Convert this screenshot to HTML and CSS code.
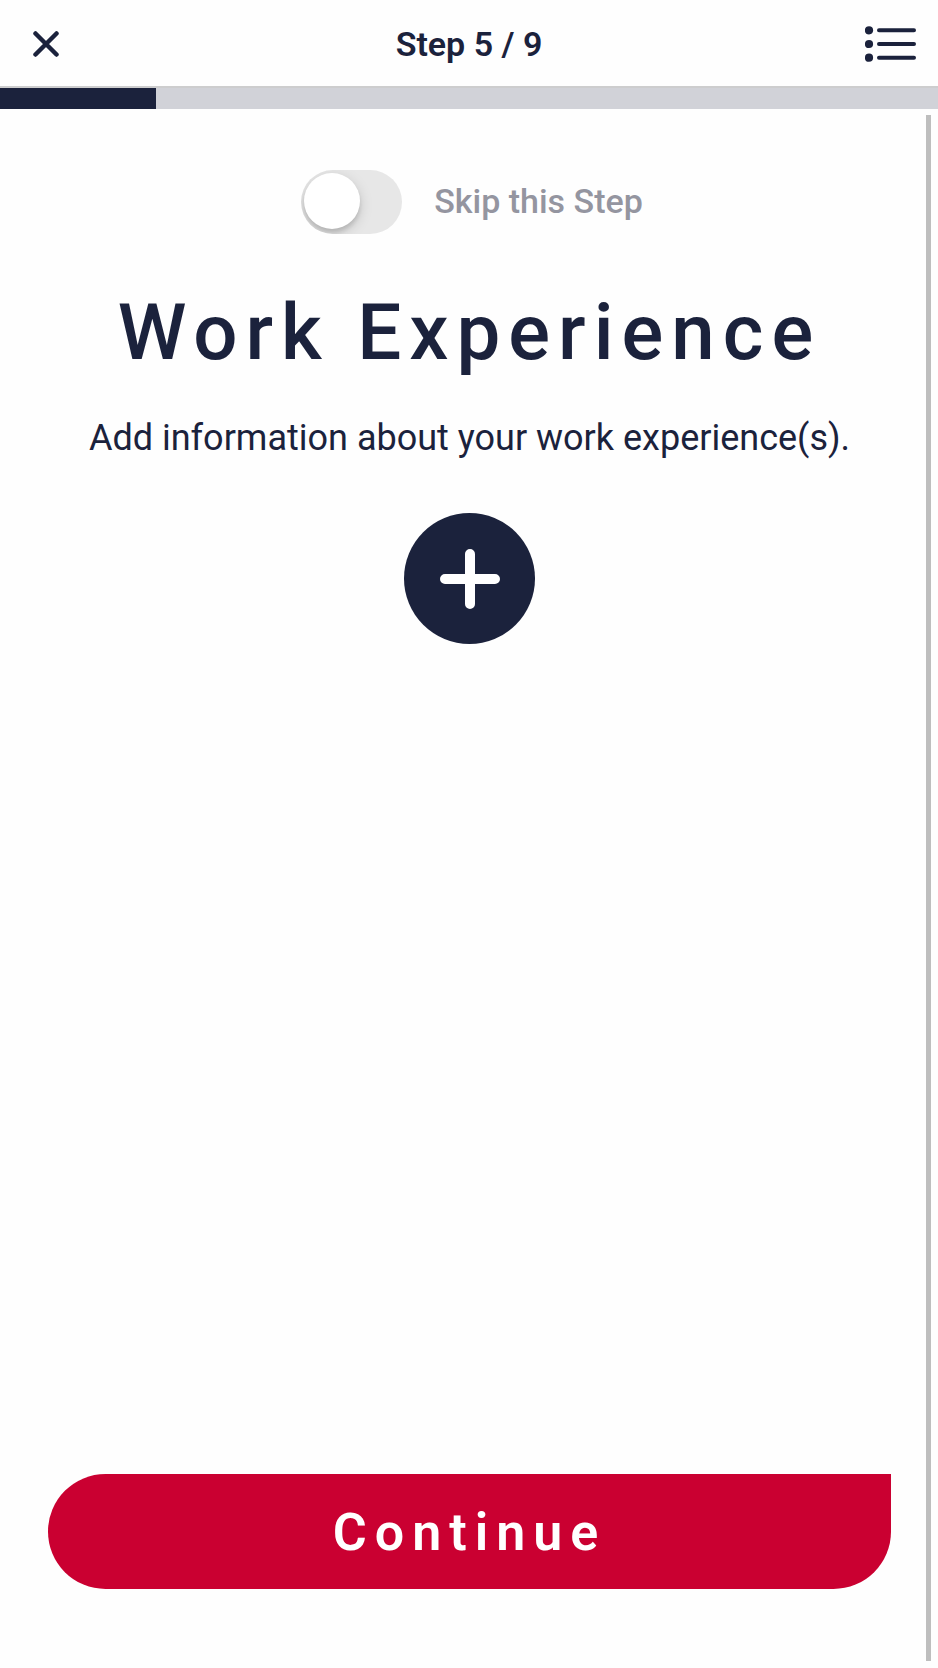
FILE: index.html
```html
<!DOCTYPE html>
<html lang="en">
<head>
<meta charset="utf-8">
<meta name="viewport" content="width=device-width, initial-scale=1">
<title>Work Experience</title>
<link rel="stylesheet" href="styles.css">
</head>
<body class="page">
  <header class="topbar">
    <button class="icon-button" type="button" aria-label="Close">
      <svg class="icon-close" viewBox="0 0 26 26" aria-hidden="true"><path d="M2.500 2.500 23.500 23.500M23.500 2.500 2.500 23.500"/></svg>
    </button>
    <p class="step">Step 5 / 9</p>
    <button class="icon-button icon-button-end" type="button" aria-label="All steps">
      <svg class="icon-list" viewBox="0 0 52 36" aria-hidden="true">
        <circle cx="4" cy="4.300" r="4.100"/><circle cx="4" cy="18" r="4.100"/><circle cx="4" cy="31.700" r="4.100"/>
        <path d="M14 4.300H49M14 18H49M14 31.700H49"/>
      </svg>
    </button>
  </header>
  <div class="progress" role="progressbar" aria-label="Progress" aria-valuemin="0" aria-valuemax="100" aria-valuenow="17">
    <div class="progress-fill"></div>
  </div>
  <main class="content">
    <label class="skip">
      <input class="switch" type="checkbox" role="switch">
      <span class="skip-text">Skip this Step</span>
    </label>
    <h1 class="title">Work Experience</h1>
    <p class="intro">Add information about your work experience(s).</p>
    <button class="add" type="button" aria-label="Add work experience">
      <svg class="icon-plus" viewBox="0 0 60 60" aria-hidden="true"><path d="M30 5V55M5 30H55"/></svg>
    </button>
    <button class="continue" type="button">Continue</button>
    <div class="scroll-thumb"></div>
  </main>
</body>
</html>
```
FILE: styles.css
```css
* {
  box-sizing: border-box;
}

.page {
  margin: 0;
  min-height: 100vh;
  display: flex;
  flex-direction: column;
  background: #fefefe;
  color: #1b223c;
  font-family: Roboto, "Liberation Sans", sans-serif;
}

button {
  border: 0;
  padding: 0;
  font-family: inherit;
  cursor: pointer;
}

.topbar {
  display: grid;
  grid-template-columns: 1fr auto 1fr;
  align-items: center;
  height: 88px;
  padding: 2px 21px 0 33px;
  border-bottom: 2px solid #cdcdce;
}

.icon-button {
  display: flex;
  justify-self: start;
  background: none;
  color: #1b223c;
}

.icon-button-end {
  justify-self: end;
}

.icon-close,
.icon-list,
.icon-plus {
  display: block;
  fill: none;
  stroke: currentColor;
  stroke-linecap: round;
}

.icon-close {
  width: 26px;
  height: 26px;
  stroke-width: 4.5;
}

.icon-list {
  width: 52px;
  height: 36px;
  stroke-width: 4;
}

.icon-list circle {
  fill: currentColor;
  stroke: none;
}

.step {
  margin: 0;
  padding-right: 12px;
  font-size: 34px;
  font-weight: 600;
  line-height: 40px;
}

.progress {
  height: 21px;
  background: #d1d2d8;
}

.progress-fill {
  width: 16.67%;
  height: 21px;
  background: #1b223c;
}

.content {
  position: relative;
  flex: 1;
  display: flex;
  flex-direction: column;
  align-items: center;
  padding: 61px 47px 79px 48px;
}

.skip {
  display: flex;
  align-items: center;
  gap: 32px;
  padding-left: 5px;
  color: #9495a0;
  font-size: 34px;
  font-weight: 500;
  line-height: 40px;
}

.skip-text {
  padding-bottom: 2px;
}

.switch {
  appearance: none;
  width: 101px;
  height: 64px;
  margin: 0;
  padding: 3px;
  border-radius: 32px;
  background: #e7e7e7;
  overflow: hidden;
}

.switch::before {
  content: "";
  display: block;
  width: 56px;
  height: 56px;
  border-radius: 50%;
  background: #fff;
  box-shadow: 0 4px 14px rgba(0, 0, 0, 0.15), 0 4px 4px rgba(0, 0, 0, 0.12);
}

.switch:checked::before {
  margin-left: auto;
}

.title {
  margin: 54px 0 0;
  font-size: 78px;
  font-weight: 500;
  line-height: 90px;
  letter-spacing: 8px;
  text-align: center;
}

.intro {
  margin: 39px 0 0;
  font-size: 36px;
  line-height: 42px;
  text-align: center;
}

.add {
  display: grid;
  place-items: center;
  width: 131px;
  height: 131px;
  margin-top: 54px;
  border-radius: 50%;
  background: #1b223c;
  color: #fff;
}

.icon-plus {
  width: 60px;
  height: 60px;
  stroke-width: 10;
}

.continue {
  align-self: stretch;
  height: 115px;
  margin-top: auto;
  padding-top: 2px;
  border-radius: 58px 0 58px 58px;
  background: #ca0031;
  color: #fff;
  font-size: 52px;
  font-weight: 600;
  letter-spacing: 8px;
}

.scroll-thumb {
  position: absolute;
  top: 6px;
  right: 7px;
  bottom: 7px;
  width: 5px;
  background: #bebebe;
}
```
